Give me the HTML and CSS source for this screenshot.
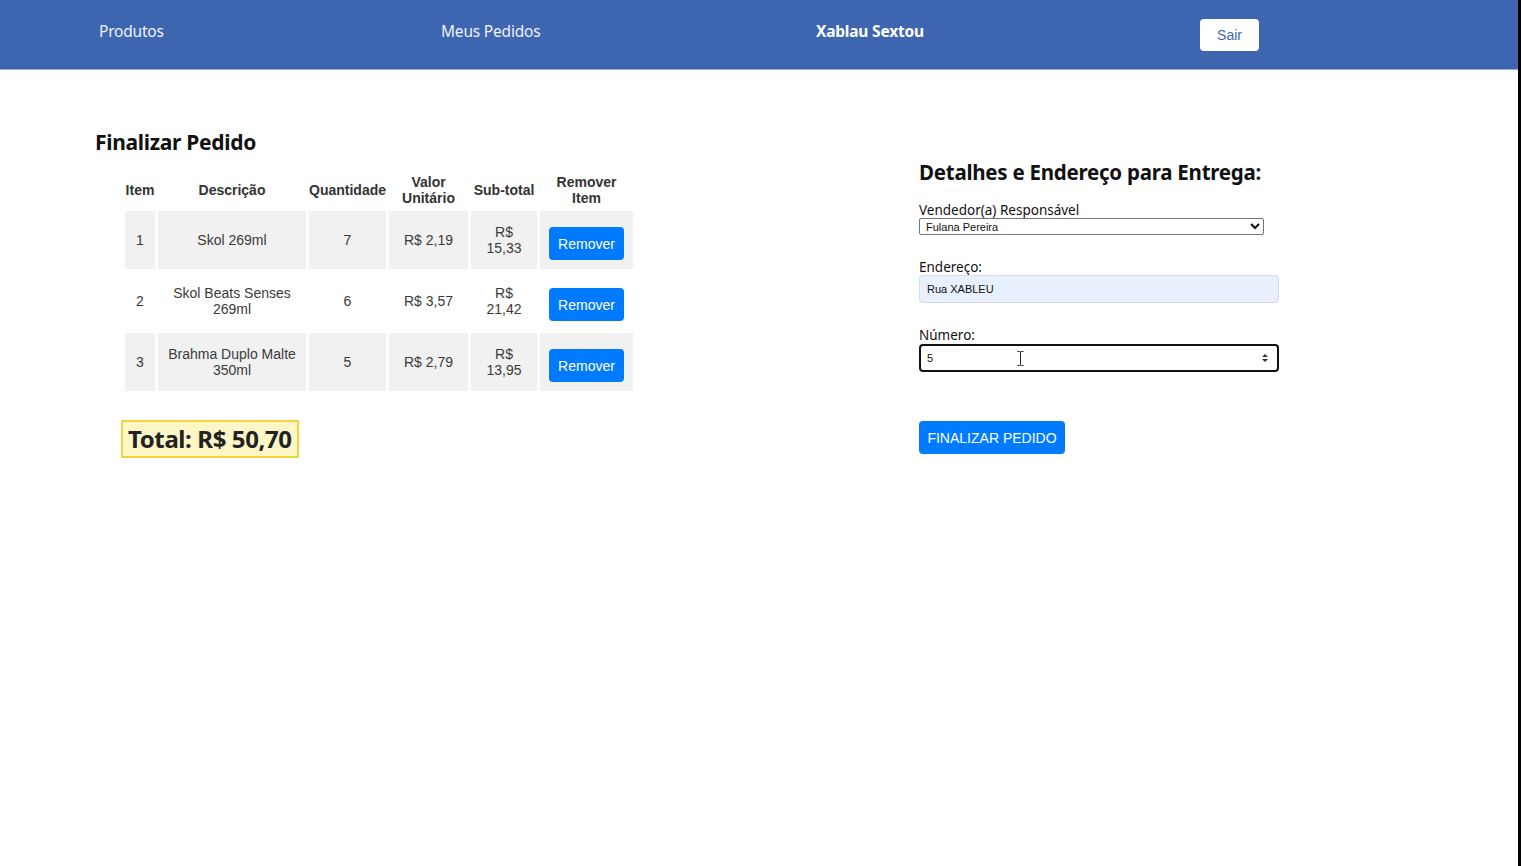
FILE: index.html
```html
<!DOCTYPE html>
<html lang="pt-BR">
<head>
<meta charset="utf-8">
<title>Finalizar Pedido</title>
<link rel="stylesheet" href="styles.css">
</head>
<body>
<div class="page">
  <header class="topbar">
    <nav class="nav">
      <span class="nav-item nav-products">Produtos</span>
      <span class="nav-item nav-orders">Meus Pedidos</span>
      <span class="nav-item nav-user">Xablau Sextou</span>
      <button class="btn-logout" type="button">Sair</button>
    </nav>
  </header>

  <main class="content">
    <section class="order">
      <h2 class="title">Finalizar Pedido</h2>
      <table class="items">
        <thead>
          <tr>
            <th class="c-item">Item</th>
            <th class="c-desc">Descrição</th>
            <th class="c-qty">Quantidade</th>
            <th class="c-unit">Valor<br>Unitário</th>
            <th class="c-sub">Sub-total</th>
            <th class="c-rem">Remover<br>Item</th>
          </tr>
        </thead>
        <tbody>
          <tr class="odd">
            <td>1</td>
            <td>Skol 269ml</td>
            <td>7</td>
            <td>R$ 2,19</td>
            <td>R$<br>15,33</td>
            <td><button class="btn-primary btn-remove" type="button">Remover</button></td>
          </tr>
          <tr>
            <td>2</td>
            <td>Skol Beats Senses<br>269ml</td>
            <td>6</td>
            <td>R$ 3,57</td>
            <td>R$<br>21,42</td>
            <td><button class="btn-primary btn-remove" type="button">Remover</button></td>
          </tr>
          <tr class="odd">
            <td>3</td>
            <td>Brahma Duplo Malte<br>350ml</td>
            <td>5</td>
            <td>R$ 2,79</td>
            <td>R$<br>13,95</td>
            <td><button class="btn-primary btn-remove" type="button">Remover</button></td>
          </tr>
        </tbody>
      </table>
      <div class="total">Total: R$ 50,70</div>
    </section>

    <section class="delivery">
      <h2 class="title title-delivery">Detalhes e Endereço para Entrega:</h2>
      <label class="field">
        <span class="label">Vendedor(a) Responsável</span>
        <select class="select">
          <option>Fulana Pereira</option>
        </select>
      </label>
      <label class="field">
        <span class="label">Endereço:</span>
        <input class="input input-autofill" type="text" value="Rua XABLEU">
      </label>
      <label class="field">
        <span class="label">Número:</span>
        <span class="input-wrap">
          <input class="input input-focus" type="text" value="5">
          <svg class="spinner" width="8" height="10" viewBox="0 0 8 10"><path d="M4 1 L7 4 H1 Z M4 9 L7 6 H1 Z" fill="#333"/></svg>
          <svg class="ibeam" width="7" height="15" viewBox="0 0 7 15"><path d="M0.5 0.5 H2.5 Q3.5 0.5 3.5 1.5 Q3.5 0.5 4.5 0.5 H6.5 M3.5 1.5 V13.5 M0.5 14.5 H2.5 Q3.5 14.5 3.5 13.5 Q3.5 14.5 4.5 14.5 H6.5" fill="none" stroke="#222" stroke-width="1"/></svg>
        </span>
      </label>
      <button class="btn-primary btn-finish" type="button">FINALIZAR PEDIDO</button>
    </section>
  </main>
</div>
</body>
</html>
```

FILE: styles.css
```css
html, body {
  margin: 0;
  padding: 0;
  background: #fff;
}

.page {
  min-height: 866px;
  border-right: 3px solid #000;
  box-sizing: border-box;
  font-family: "Noto Sans", "Open Sans", "DejaVu Sans", sans-serif;
  color: #111;
}

.topbar {
  background: #3e65b0;
  height: 69px;
  border-bottom: 1px solid #9aaed3;
}

.nav {
  display: flex;
  align-items: center;
  height: 69px;
  padding-left: 99px;
  padding-bottom: 8px;
  box-sizing: border-box;
}

.nav-item {
  font-size: 15.5px;
  color: #eef1f8;
  letter-spacing: -0.2px;
}

.nav-products { width: 342px; }
.nav-orders { width: 375px; }
.nav-user { width: 384px; font-weight: 700; color: #fff; }

.btn-logout {
  width: 59px;
  height: 32px;
  margin-top: 9px;
  background: #fff;
  border: none;
  border-radius: 4px;
  color: #3e65b0;
  font-family: "Liberation Sans", Arial, sans-serif;
  font-size: 14px;
  padding: 0;
}

.content {
  display: flex;
  align-items: flex-start;
  padding-left: 95px;
}

.order {
  width: 824px;
  padding-top: 59px;
}

.title {
  margin: 0;
  font-size: 21px;
  font-weight: 700;
  letter-spacing: -0.3px;
  line-height: 26px;
  color: #111;
}

.items {
  margin: 14px 0 0 27px;
  border-collapse: separate;
  border-spacing: 3px;
  font-family: "Liberation Sans", Arial, sans-serif;
  font-size: 14px;
  color: #3a3a3a;
  text-align: center;
}

.items th {
  font-weight: 700;
  color: #333;
  padding: 2px 0;
  line-height: 16px;
  height: 32px;
}

.c-item { width: 30px; }
.c-desc { width: 148px; }
.c-qty { width: 77px; }
.c-unit { width: 79px; }
.c-sub { width: 66px; }
.c-rem { width: 93px; }

.items td {
  padding: 9px 0 9px;
  line-height: 16px;
  height: 40px;
  vertical-align: middle;
}

.items tr.odd td {
  background: #f1f1f1;
}

.btn-primary {
  background: #007bff;
  color: #fff;
  border: none;
  border-radius: 4px;
  font-family: "Liberation Sans", Arial, sans-serif;
  font-size: 14px;
}

.btn-remove {
  width: 75px;
  height: 33px;
  padding: 0;
  margin-top: 7px;
  vertical-align: top;
}

.total {
  display: inline-block;
  margin: 26px 0 0 26px;
  padding: 3px 5px 3px 5px;
  background: #fdf6c6;
  border: 2px solid #f4d43d;
  font-size: 24px;
  font-weight: 700;
  line-height: 28px;
  letter-spacing: -0.4px;
  color: #222;
}

.delivery {
  display: flex;
  flex-direction: column;
  align-items: flex-start;
  padding-top: 89px;
}

.title-delivery {
  font-size: 20.5px;
  letter-spacing: -0.25px;
  margin-bottom: 17px;
}

.field {
  display: flex;
  flex-direction: column;
  margin-bottom: 24px;
}

.label {
  font-size: 13.5px;
  line-height: 16px;
  color: #111;
}

.select {
  width: 345px;
  height: 17px;
  font-family: "Liberation Sans", Arial, sans-serif;
  font-size: 11px;
  padding: 0 2px;
  border: 1px solid #767676;
  border-radius: 2px;
  background: #fff;
  color: #111;
}

.input {
  width: 360px;
  height: 28px;
  box-sizing: border-box;
  padding: 0 7px;
  font-family: "Liberation Sans", Arial, sans-serif;
  font-size: 11px;
  color: #111;
  border-radius: 4px;
  outline: none;
}

.input-autofill {
  background: #e8f0fe;
  border: 1px solid #d4dbe6;
}

.input-focus {
  background: #fff;
  border: 2px solid #111;
  padding-left: 6px;
}

.input-wrap {
  position: relative;
  display: block;
  margin-top: 1px;
}

.spinner {
  position: absolute;
  right: 10px;
  top: 9px;
}

.ibeam {
  position: absolute;
  left: 98px;
  top: 7px;
}

.btn-finish {
  margin-top: 25px;
  width: 146px;
  height: 33px;
  padding: 0;
  text-align: center;
}
```
